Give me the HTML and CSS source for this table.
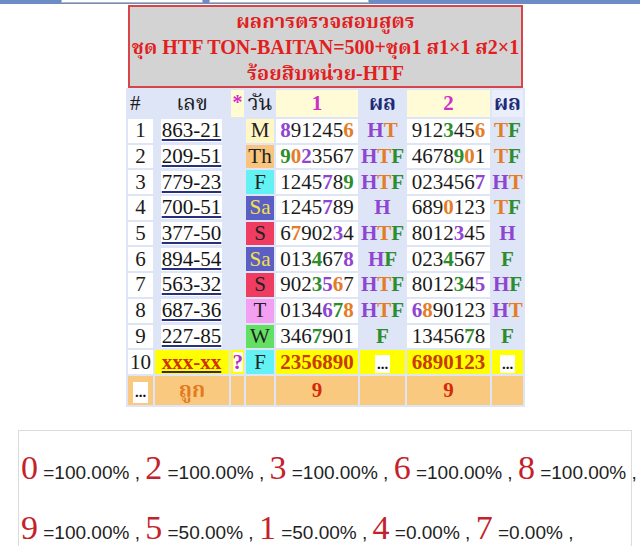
FILE: index.html
```html
<!DOCTYPE html>
<html lang="th">
<head>
<meta charset="utf-8">
<title>ผลการตรวจสอบสูตร</title>
<link rel="stylesheet" href="styles.css">
</head>
<body>
<div class="topbar"><span class="tab tab-a"></span><span class="tab tab-b"></span></div>
<table class="sheet">
<caption class="title">ผลการตรวจสอบสูตร<br>ชุด HTF TON-BAITAN=500+ชุด1 ส1×1 ส2×1<br>ร้อยสิบหน่วย-HTF</caption>
<colgroup>
<col class="c-no"><col class="c-num"><col class="c-star"><col class="c-day"><col class="c-set"><col class="c-res"><col class="c-set2"><col class="c-res2">
</colgroup>
<thead>
<tr><th class="hash">#</th><th>เลข</th><th class="star"><span class="ast">*</span></th><th>วัน</th><th class="set">1</th><th class="res">ผล</th><th class="set">2</th><th class="res last">ผล</th></tr>
</thead>
<tbody>
<tr><td class="no">1</td><td class="num"><a class="link">863-21</a></td><td></td><td class="day mon">M</td><td class="digits"><b class="h">8</b>91245<b class="t">6</b></td><td class="res"><b class="h">H</b><b class="t">T</b></td><td class="digits">912<b class="f">3</b>45<b class="t">6</b></td><td class="res"><b class="t">T</b><b class="f">F</b></td></tr>
<tr><td class="no">2</td><td class="num"><a class="link">209-51</a></td><td></td><td class="day thu">Th</td><td class="digits"><b class="f">9</b><b class="t">0</b><b class="h">2</b>3567</td><td class="res"><b class="h">H</b><b class="t">T</b><b class="f">F</b></td><td class="digits">4678<b class="f">9</b><b class="t">0</b>1</td><td class="res"><b class="t">T</b><b class="f">F</b></td></tr>
<tr><td class="no">3</td><td class="num"><a class="link">779-23</a></td><td></td><td class="day fri">F</td><td class="digits">1245<b class="h">7</b>8<b class="f">9</b></td><td class="res"><b class="h">H</b><b class="t">T</b><b class="f">F</b></td><td class="digits">023456<b class="h">7</b></td><td class="res"><b class="h">H</b><b class="t">T</b></td></tr>
<tr><td class="no">4</td><td class="num"><a class="link">700-51</a></td><td></td><td class="day sat">Sa</td><td class="digits">1245<b class="h">7</b>89</td><td class="res"><b class="h">H</b></td><td class="digits">689<b class="t">0</b>123</td><td class="res"><b class="t">T</b><b class="f">F</b></td></tr>
<tr><td class="no">5</td><td class="num"><a class="link">377-50</a></td><td></td><td class="day sun">S</td><td class="digits">6<b class="t">7</b>902<b class="h">3</b>4</td><td class="res"><b class="h">H</b><b class="t">T</b><b class="f">F</b></td><td class="digits">8012<b class="h">3</b>45</td><td class="res"><b class="h">H</b></td></tr>
<tr><td class="no">6</td><td class="num"><a class="link">894-54</a></td><td></td><td class="day sat">Sa</td><td class="digits">013<b class="f">4</b>67<b class="h">8</b></td><td class="res"><b class="h">H</b><b class="f">F</b></td><td class="digits">023<b class="f">4</b>567</td><td class="res"><b class="f">F</b></td></tr>
<tr><td class="no">7</td><td class="num"><a class="link">563-32</a></td><td></td><td class="day sun">S</td><td class="digits">902<b class="f">3</b><b class="h">5</b><b class="t">6</b>7</td><td class="res"><b class="h">H</b><b class="t">T</b><b class="f">F</b></td><td class="digits">8012<b class="f">3</b>4<b class="h">5</b></td><td class="res"><b class="h">H</b><b class="f">F</b></td></tr>
<tr><td class="no">8</td><td class="num"><a class="link">687-36</a></td><td></td><td class="day tue">T</td><td class="digits">0134<b class="h">6</b><b class="f">7</b><b class="t">8</b></td><td class="res"><b class="h">H</b><b class="t">T</b><b class="f">F</b></td><td class="digits"><b class="h">6</b><b class="t">8</b>90123</td><td class="res"><b class="h">H</b><b class="t">T</b></td></tr>
<tr><td class="no">9</td><td class="num"><a class="link">227-85</a></td><td></td><td class="day wed">W</td><td class="digits">346<b class="f">7</b>901</td><td class="res"><b class="f">F</b></td><td class="digits">13456<b class="f">7</b>8</td><td class="res"><b class="f">F</b></td></tr>
<tr class="next"><td class="no">10</td><td class="num"><a class="guess">xxx-xx</a></td><td><span class="q">?</span></td><td class="day fri">F</td><td class="digits strong">2356890</td><td class="res"><span class="dots">...</span></td><td class="digits strong">6890123</td><td class="res"><span class="dots">...</span></td></tr>
<tr class="total"><td class="no"><span class="dots">...</span></td><td class="label">ถูก</td><td></td><td></td><td class="hits">9</td><td></td><td class="hits">9</td><td></td></tr>
</tbody>
</table>

<div class="stats">
<div class="line"><b class="dg">0</b> =100.00% , <b class="dg">2</b> =100.00% , <b class="dg">3</b> =100.00% , <b class="dg">6</b> =100.00% , <b class="dg">8</b> =100.00% ,</div>
<div class="line"><b class="dg">9</b> =100.00% , <b class="dg">5</b> =50.00% , <b class="dg">1</b> =50.00% , <b class="dg">4</b> =0.00% , <b class="dg">7</b> =0.00% ,</div>
</div>
</body>
</html>
```
FILE: styles.css
```css
* { box-sizing: border-box; }
html, body { margin: 0; padding: 0; background: #fff; }
body {
  width: 640px;
  height: 546px;
  overflow: hidden;
  font-family: "Liberation Serif", "Noto Serif Thai", "Noto Sans Thai", "Tlwg Typo", "Garuda", serif;
  color: #1b1b1b;
}

.topbar {
  height: 4px;
  background: #6b8cc4;
  display: flex;
  gap: 6px;
  padding-left: 61px;
}
.tab { height: 3px; background: #fff; border: 1px solid #b5b5b5; border-top: 0; }
.tab-a { width: 142px; }
.tab-b { width: 160px; }

.sheet {
  width: 399px;
  margin: 1px 0 0 126px;
  border-collapse: separate;
  border-spacing: 2px;
  background: #dde5f6;
  table-layout: fixed;
  font-size: 21px;
}
.c-no { width: 25px; }
.c-num { width: 74px; }
.c-star { width: 13px; }
.c-day { width: 28px; }
.c-set { width: 82px; }
.c-res { width: 45px; }
.c-set2 { width: 83px; }
.c-res2 { width: 31px; }

.title {
  margin: 0 2px 0;
  height: 83px;
  border: 2px solid #d7444a;
  background: #d3d3d3;
  color: #e1201e;
  font-weight: bold;
  font-size: 20px;
  line-height: 26px;
  padding-top: 1px;
  text-align: center;
  white-space: nowrap;
}

th, td {
  padding: 0;
  text-align: center;
  white-space: nowrap;
}
td { overflow: hidden; }
th {
  height: 27px;
  font-weight: normal;
  line-height: 27px;
}
th.hash { text-align: left; padding-left: 2px; }
th.star { background: #fffbd2; vertical-align: top; }
.ast {
  display: block;
  color: #d62fc6;
  font-weight: bold;
  font-size: 20px;
  line-height: 24px;
}
th.set { background: #fffbd6; color: #d02fc6; font-weight: bold; }
th.res { color: #1e2a78; font-weight: bold; }
th.last { background: #e9eefa; }

td { height: 23.7px; line-height: 23px; }
td.no { background: #fff; }
td.num { padding: 0 7px 0 6px; }
.link {
  display: block;
  background: #fff;
  color: #151515;
  text-decoration: underline;
  text-decoration-color: #26307f;
  text-decoration-thickness: 2px;
  text-underline-offset: 2px;
}
td.digits { background: #fff; }
td.digits b { font-weight: bold; }

.day { color: #222; }
.mon { background: #fff7c4; }
.thu { background: #f8c47e; }
.fri { background: #63f2f4; }
.sat { background: #5b5fc3; color: #f3e24a; }
.sun { background: #f13c62; }
.tue { background: #f4a0f2; }
.wed { background: #63e063; }

.h { color: #8f45d2; }
.t { color: #e57c26; }
.f { color: #2d8c2d; }
td.res b { font-weight: bold; }

.next td { background: #ffff00; }
.next td.no { background: #fff; }
.next td.day { background: #63f2f4; }
.guess {
  color: #d03200;
  font-weight: bold;
  text-decoration: underline;
  text-decoration-color: #3a2a40;
  text-decoration-thickness: 2px;
  text-underline-offset: 2px;
}
.q {
  display: inline-block;
  background: #fffde8;
  color: #b22fca;
  font-weight: bold;
  width: 10px;
  line-height: 20px;
}
.next td.strong { color: #c93a06; font-weight: bold; background: #ffff00; }
.dots {
  display: inline-block;
  background: #fff;
  color: #111;
  font-weight: bold;
  font-size: 15px;
  line-height: 18px;
  padding: 0 2px;
}

.total td { background: #f9c97f; height: 29px; line-height: 29px; }
.total .dots { line-height: 21px; padding: 0 2px; vertical-align: middle; }
.label { color: #e27a1f; font-weight: bold; }
.hits { color: #d22a0c; font-weight: bold; }

.stats {
  margin: 23px 8px 0 18px;
  border: 1px solid #dcdcdc;
  padding: 12px 0 0 2px;
  height: 130px;
  font-family: "Liberation Sans", Arial, sans-serif;
  font-size: 19px;
  color: #222;
}
.line { line-height: 60px; white-space: nowrap; }
.dg {
  font-family: "Liberation Serif", serif;
  font-weight: normal;
  font-size: 34px;
  line-height: 0;
  color: #c4222a;
}
```
